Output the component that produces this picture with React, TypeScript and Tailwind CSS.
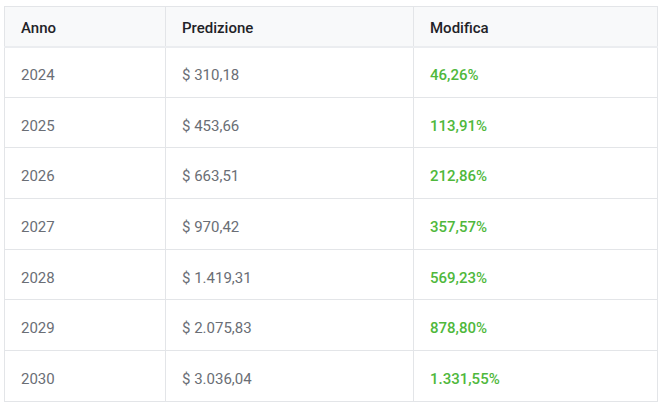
const rows = [
  ["2024", "$ 310,18", "46,26%"],
  ["2025", "$ 453,66", "113,91%"],
  ["2026", "$ 663,51", "212,86%"],
  ["2027", "$ 970,42", "357,57%"],
  ["2028", "$ 1.419,31", "569,23%"],
  ["2029", "$ 2.075,83", "878,80%"],
  ["2030", "$ 3.036,04", "1.331,55%"],
];

export default function App() {
  return (
    <div className="w-[660px] h-[407px] bg-white pt-[6px] pl-[4px] font-['Roboto',sans-serif]">
      <table className="w-[654px] border-collapse text-[15px] leading-[20px]">
        <thead>
          <tr className="bg-[#f8f9fa] h-[40px] border-b-2 border-[#ebedf0]">
            <th className="w-[161px] border border-[#e3e5e8] px-4 pt-[3px] text-left font-medium text-[#1f2328]">Anno</th>
            <th className="w-[248px] border border-[#e3e5e8] px-4 pt-[3px] text-left font-medium text-[#1f2328]">Predizione</th>
            <th className="border border-[#e3e5e8] px-4 pt-[3px] text-left font-medium text-[#1f2328]">Modifica</th>
          </tr>
        </thead>
        <tbody>
          {rows.map(([y, p, m]) => (
            <tr key={y} className="h-[50.7px]">
              <td className="border border-[#e3e5e8] px-4 pt-[6px] text-[#6a6e75]">{y}</td>
              <td className="border border-[#e3e5e8] px-4 pt-[6px] text-[#6a6e75]">{p}</td>
              <td className="border border-[#e3e5e8] px-4 pt-[6px] font-medium text-[#4fb83c]">{m}</td>
            </tr>
          ))}
        </tbody>
      </table>
    </div>
  );
}
